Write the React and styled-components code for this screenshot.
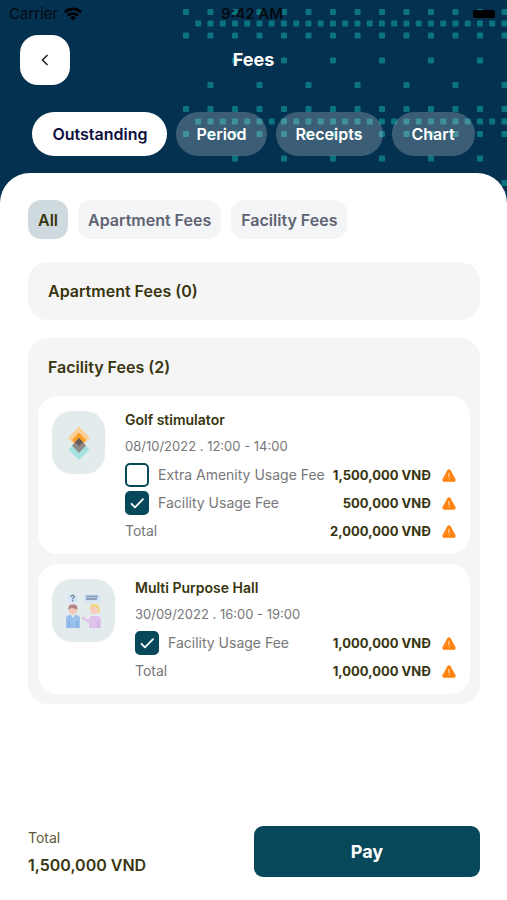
import React, { useState } from "react";
import styled, { createGlobalStyle } from "styled-components";

const GlobalStyle = createGlobalStyle`
  *, *::before, *::after { box-sizing: border-box; }
  body { margin: 0; background: #043150; }
  body, button, input { font-family: Inter, "Open Sans", sans-serif; }
  h1, h2, h3, p, ul { margin: 0; padding: 0; }
  ul { list-style: none; }
  button { border: 0; padding: 0; cursor: pointer; }
`;

const Screen = styled.div`
  position: relative;
  display: flex;
  flex-direction: column;
  min-height: 100vh;
  overflow: hidden;
  background: #043150;
`;

const Backdrop = styled.svg`
  position: absolute;
  top: 0;
  right: 0;
  fill: #0b7480;
`;

const Header = styled.header`
  position: relative;
  padding-bottom: 17px;
`;

const StatusBar = styled.div`
  display: grid;
  grid-template-columns: 1fr auto 1fr;
  align-items: center;
  height: 28px;
  padding: 0 12px 0 9px;
  color: #050a10;
  font-size: 15px;
  line-height: 20px;
`;

const Carrier = styled.span`
  display: flex;
  align-items: center;
  gap: 6px;
`;

const Clock = styled.span`
  font-weight: 600;
`;

const Battery = styled.span`
  justify-self: end;
  width: 22px;
  height: 8px;
  border-radius: 2px;
  background: #000;
`;

const TitleBar = styled.div`
  display: grid;
  grid-template-columns: 1fr auto 1fr;
  align-items: center;
  padding: 7px 20px 27px;
`;

const BackButton = styled.button`
  display: grid;
  place-items: center;
  width: 50px;
  height: 50px;
  border-radius: 18px;
  background: #fff;
`;

const Title = styled.h1`
  color: #fff;
  font-size: 18px;
  font-weight: 700;
  line-height: 24px;
`;

const Tabs = styled.nav`
  display: flex;
  justify-content: center;
  gap: 9px;
`;

const Tab = styled.button`
  height: 44px;
  padding: 0 20px;
  border-radius: 22px;
  background: ${(p) => (p.$active ? "#fff" : "rgba(255, 255, 255, 0.22)")};
  color: ${(p) => (p.$active ? "#0b0f3f" : "#fff")};
  font-size: 16px;
  font-weight: 600;
  line-height: 20px;
`;

const Sheet = styled.main`
  position: relative;
  display: flex;
  flex: 1;
  flex-direction: column;
  padding: 27px 27px 23px 28px;
  border-radius: 30px 30px 0 0;
  background: #fff;
`;

const Filters = styled.div`
  display: flex;
  gap: 10px;
  margin-bottom: 23px;
`;

const Filter = styled.button`
  height: 39px;
  padding: 0 10px;
  border-radius: 13px;
  background: ${(p) => (p.$active ? "#cedadd" : "#f3f5f7")};
  color: ${(p) => (p.$active ? "#3a3510" : "#5f6373")};
  font-size: 16px;
  font-weight: 600;
  line-height: 20px;
`;

const Panel = styled.section`
  padding: 0 10px;
  border-radius: 20px;
  background: #f5f5f5;

  & + & {
    margin-top: 18px;
    padding-bottom: 10px;
  }
`;

const PanelTitle = styled.h2`
  padding: 19px 10px;
  color: #38350f;
  font-size: 16px;
  font-weight: 600;
  line-height: 20px;
`;

const Cards = styled.ul`
  display: grid;
  gap: 10px;
`;

const Card = styled.li`
  display: flex;
  align-items: flex-start;
  gap: 20px;
  padding: 15px 14px 14px;
  border-radius: 20px;
  background: #fff;
`;

const Thumb = styled.div`
  display: grid;
  flex: none;
  place-items: center;
  width: ${(p) => (p.$narrow ? 53 : 63)}px;
  height: 63px;
  border-radius: 20px;
  background: #e4ebec;
`;

const Details = styled.div`
  flex: 1;
  min-width: 0;
  font-size: 14px;
  line-height: 18px;
  color: #77777a;
`;

const Name = styled.h3`
  margin-bottom: 8px;
  color: #38350f;
  font-size: 14px;
  font-weight: 600;
  line-height: 18px;
`;

const When = styled.p`
  margin-bottom: 6px;
  font-size: 13px;
`;

const Line = styled.div`
  display: flex;
  align-items: center;
  justify-content: space-between;
  white-space: nowrap;
  min-height: ${(p) => (p.$total ? 18 : 28)}px;
  margin-top: ${(p) => (p.$total ? 5 : 0)}px;
`;

const FeeLabel = styled.label`
  display: flex;
  align-items: center;
  gap: 9px;
`;

const CheckFrame = styled.span`
  display: grid;
  flex: none;
  width: 24px;
  height: 24px;

  & > * {
    grid-area: 1 / 1;
  }

  svg {
    pointer-events: none;
  }
`;

const CheckInput = styled.input`
  appearance: none;
  width: 24px;
  height: 24px;
  margin: 0;
  border: 2px solid #07495a;
  border-radius: 5px;
  background: #fff;

  &:checked {
    background: #07495a;
  }
`;

const Amount = styled.span`
  display: flex;
  align-items: center;
  gap: 11px;
  color: #38350f;
  font-size: 13px;
  font-weight: 700;
`;

const Footer = styled.footer`
  display: grid;
  grid-template-columns: 1fr 1fr;
  align-items: center;
  margin-top: auto;
  padding-top: 24px;
`;

const Summary = styled.div`
  color: #38350f;
`;

const SummaryLabel = styled.p`
  margin-bottom: 8px;
  color: #5d5a38;
  font-size: 14px;
  line-height: 18px;
`;

const SummaryAmount = styled.p`
  font-size: 16px;
  font-weight: 600;
  line-height: 20px;
`;

const PayButton = styled.button`
  height: 51px;
  border-radius: 9px;
  background: #07495a;
  color: #fff;
  font-size: 18px;
  font-weight: 700;
`;

const range = (from, step) => {
  const out = [];
  for (let x = from; x < 325; x += step) out.push(x);
  return out;
};

// Distances are measured from the left edge of the pattern.
const DOT_ROWS = [
  [12, range(6, 24.5)],
  [23.5, range(18.2, 12.25)],
  [35.5, range(6, 24.5)],
  [60.5, range(55, 49)],
  [85, range(30.5, 49)],
  [109, range(6, 24.5)],
  [121.5, range(18.2, 12.25)],
  [134, range(6, 24.5)],
  [158.5, range(55, 49)],
  [183, range(30.5, 49)],
];

function Dots() {
  return (
    <Backdrop width="327" height="210" aria-hidden="true">
      {DOT_ROWS.map(([y, xs]) =>
        xs.map((x) => (
          <rect key={`${x}-${y}`} x={x - 3} y={y - 3} width="6" height="6" rx="1" />
        ))
      )}
    </Backdrop>
  );
}

function Wifi() {
  return (
    <svg width="18" height="14" viewBox="0 0 18 14" aria-hidden="true">
      <g fill="none" stroke="#000" strokeWidth="2.6">
        <path d="M1 5.2a11.4 11.4 0 0 1 16 0" />
        <path d="M4 8.5a7.2 7.2 0 0 1 10 0" />
      </g>
      <path d="M9 13.6 6.2 10.7a4 4 0 0 1 5.6 0z" />
    </svg>
  );
}

function Warning() {
  return (
    <svg width="14" height="13" viewBox="0 0 14 13" role="img" aria-label="Unpaid">
      <path
        d="M5.500 1.100a1.800 1.800 0 0 1 3 0l4.800 8.600c.8 1.500 0 3-1.600 3H2.300c-1.600 0-2.400-1.500-1.600-3z"
        fill="#fd8411"
      />
      <path d="M7 4.500v3" stroke="#ffd9b0" strokeWidth="1.200" strokeLinecap="round" />
      <circle cx="7" cy="9.600" r=".7" fill="#ffd9b0" />
    </svg>
  );
}

function Layers() {
  return (
    <svg width="24" height="36" viewBox="0 0 24 36" aria-hidden="true">
      <path d="M12 14 22.500 24.500 12 35 1.500 24.500z" fill="#a3e2de" />
      <path d="M12 1.500 23 13 12 24 1 13z" fill="#fbcf94" />
      <path d="M12 7.500 19 15 12 22 5 15z" fill="#fa9e26" />
      <path d="M12 13 19 20.500 12 28 5 20.500z" fill="#8f8b88" />
      <path d="M12 13 16 17.200 12 21 8 17.200z" fill="#665d57" />
    </svg>
  );
}

function Meeting() {
  return (
    <svg width="38" height="38" viewBox="0 0 38 38" opacity="0.8" aria-hidden="true">
      <path d="M3 2h9v8H9l-1.500 2L6 10H3z" fill="#cfe5fa" />
      <path d="M6 4.800c0-2 3.200-2 3.200 0 0 1.200-1.600 1.200-1.600 2.400" fill="none" stroke="#486079" strokeWidth="1.200" />
      <circle cx="7.600" cy="8.700" r=".7" fill="#486079" />
      <path d="M19 2h16v8h-6l-1.500 2-1.500-2h-7z" fill="#cfe5fa" />
      <path d="M21 4.500h12M21 7h11" stroke="#7891ab" strokeWidth="1.800" />
      <circle cx="8" cy="18.500" r="4.200" fill="#f5bfae" />
      <path d="M3.600 18c-.8-4.500 1.500-6 4.400-5.500 3.500-.5 5 2 4.200 5.500-1-2-5-1-5.600-2.400-.8 1.500-2 1.200-3 2.400z" fill="#a66c68" />
      <path d="M1 36v-9q0-4 4-4h6q4 0 4 4v9z" fill="#86b6ee" />
      <path d="M4 36v-7M12 36v-7" stroke="#6496d6" strokeWidth="1" />
      <path d="m6 23 2 3 2-3z" fill="#e7f2ff" />
      <path d="M25 18c-1-5 2-6.500 5-6 4 0 5.500 3 4.500 9h-5z" fill="#f5d16f" />
      <circle cx="29" cy="18.500" r="3.800" fill="#f8c9b8" />
      <path d="m17 24 6 4 3-4h6q4 0 4 4v8H24v-5l-7-4z" fill="#dfb9ed" />
      <path d="M33 36v-7" stroke="#c994dd" strokeWidth="1" />
    </svg>
  );
}

function Checkbox({ checked, onChange }) {
  return (
    <CheckFrame>
      <CheckInput type="checkbox" checked={checked} onChange={onChange} />
      {checked && (
        <svg width="24" height="24" viewBox="0 0 24 24" aria-hidden="true">
          <path
            d="m6.500 12.800 3.500 3.600 8-8.300"
            fill="none"
            stroke="#fff"
            strokeWidth="1.800"
            strokeLinecap="round"
            strokeLinejoin="round"
          />
        </svg>
      )}
    </CheckFrame>
  );
}

function FeeLine({ label, amount, initial }) {
  const [checked, setChecked] = useState(initial);
  return (
    <Line>
      <FeeLabel>
        <Checkbox checked={checked} onChange={() => setChecked(!checked)} />
        {label}
      </FeeLabel>
      <Amount>
        {amount}
        <Warning />
      </Amount>
    </Line>
  );
}

const TABS = ["Outstanding", "Period", "Receipts", "Chart"];
const FILTERS = ["All", "Apartment Fees", "Facility Fees"];
const BOOKINGS = [
  {
    name: "Golf stimulator",
    when: "08/10/2022 . 12:00 - 14:00",
    icon: <Layers />,
    narrow: true,
    fees: [
      { label: "Extra Amenity Usage Fee", amount: "1,500,000 VNĐ", initial: false },
      { label: "Facility Usage Fee", amount: "500,000 VNĐ", initial: true },
    ],
    total: "2,000,000 VNĐ",
  },
  {
    name: "Multi Purpose Hall",
    when: "30/09/2022 . 16:00 - 19:00",
    icon: <Meeting />,
    narrow: false,
    fees: [{ label: "Facility Usage Fee", amount: "1,000,000 VNĐ", initial: true }],
    total: "1,000,000 VNĐ",
  },
];

export default function App() {
  const [tab, setTab] = useState("Outstanding");
  const [filter, setFilter] = useState("All");
  return (
    <Screen>
      <GlobalStyle />
      <Dots />
      <Header>
        <StatusBar>
          <Carrier>
            Carrier
            <Wifi />
          </Carrier>
          <Clock>9:42 AM</Clock>
          <Battery />
        </StatusBar>
        <TitleBar>
          <BackButton aria-label="Back">
            <svg width="8" height="12" viewBox="0 0 8 12" aria-hidden="true">
              <path d="M6.500 1 1.500 6l5 5" fill="none" stroke="#222" strokeWidth="1.600" />
            </svg>
          </BackButton>
          <Title>Fees</Title>
        </TitleBar>
        <Tabs>
          {TABS.map((t) => (
            <Tab key={t} $active={t === tab} onClick={() => setTab(t)}>
              {t}
            </Tab>
          ))}
        </Tabs>
      </Header>
      <Sheet>
        <Filters>
          {FILTERS.map((f) => (
            <Filter key={f} $active={f === filter} onClick={() => setFilter(f)}>
              {f}
            </Filter>
          ))}
        </Filters>
        <Panel>
          <PanelTitle>Apartment Fees (0)</PanelTitle>
        </Panel>
        <Panel>
          <PanelTitle>Facility Fees (2)</PanelTitle>
          <Cards>
            {BOOKINGS.map((b) => (
              <Card key={b.name}>
                <Thumb $narrow={b.narrow}>{b.icon}</Thumb>
                <Details>
                  <Name>{b.name}</Name>
                  <When>{b.when}</When>
                  {b.fees.map((fee) => (
                    <FeeLine key={fee.label} {...fee} />
                  ))}
                  <Line $total>
                    <span>Total</span>
                    <Amount>
                      {b.total}
                      <Warning />
                    </Amount>
                  </Line>
                </Details>
              </Card>
            ))}
          </Cards>
        </Panel>
        <Footer>
          <Summary>
            <SummaryLabel>Total</SummaryLabel>
            <SummaryAmount>1,500,000 VND</SummaryAmount>
          </Summary>
          <PayButton>Pay</PayButton>
        </Footer>
      </Sheet>
    </Screen>
  );
}
